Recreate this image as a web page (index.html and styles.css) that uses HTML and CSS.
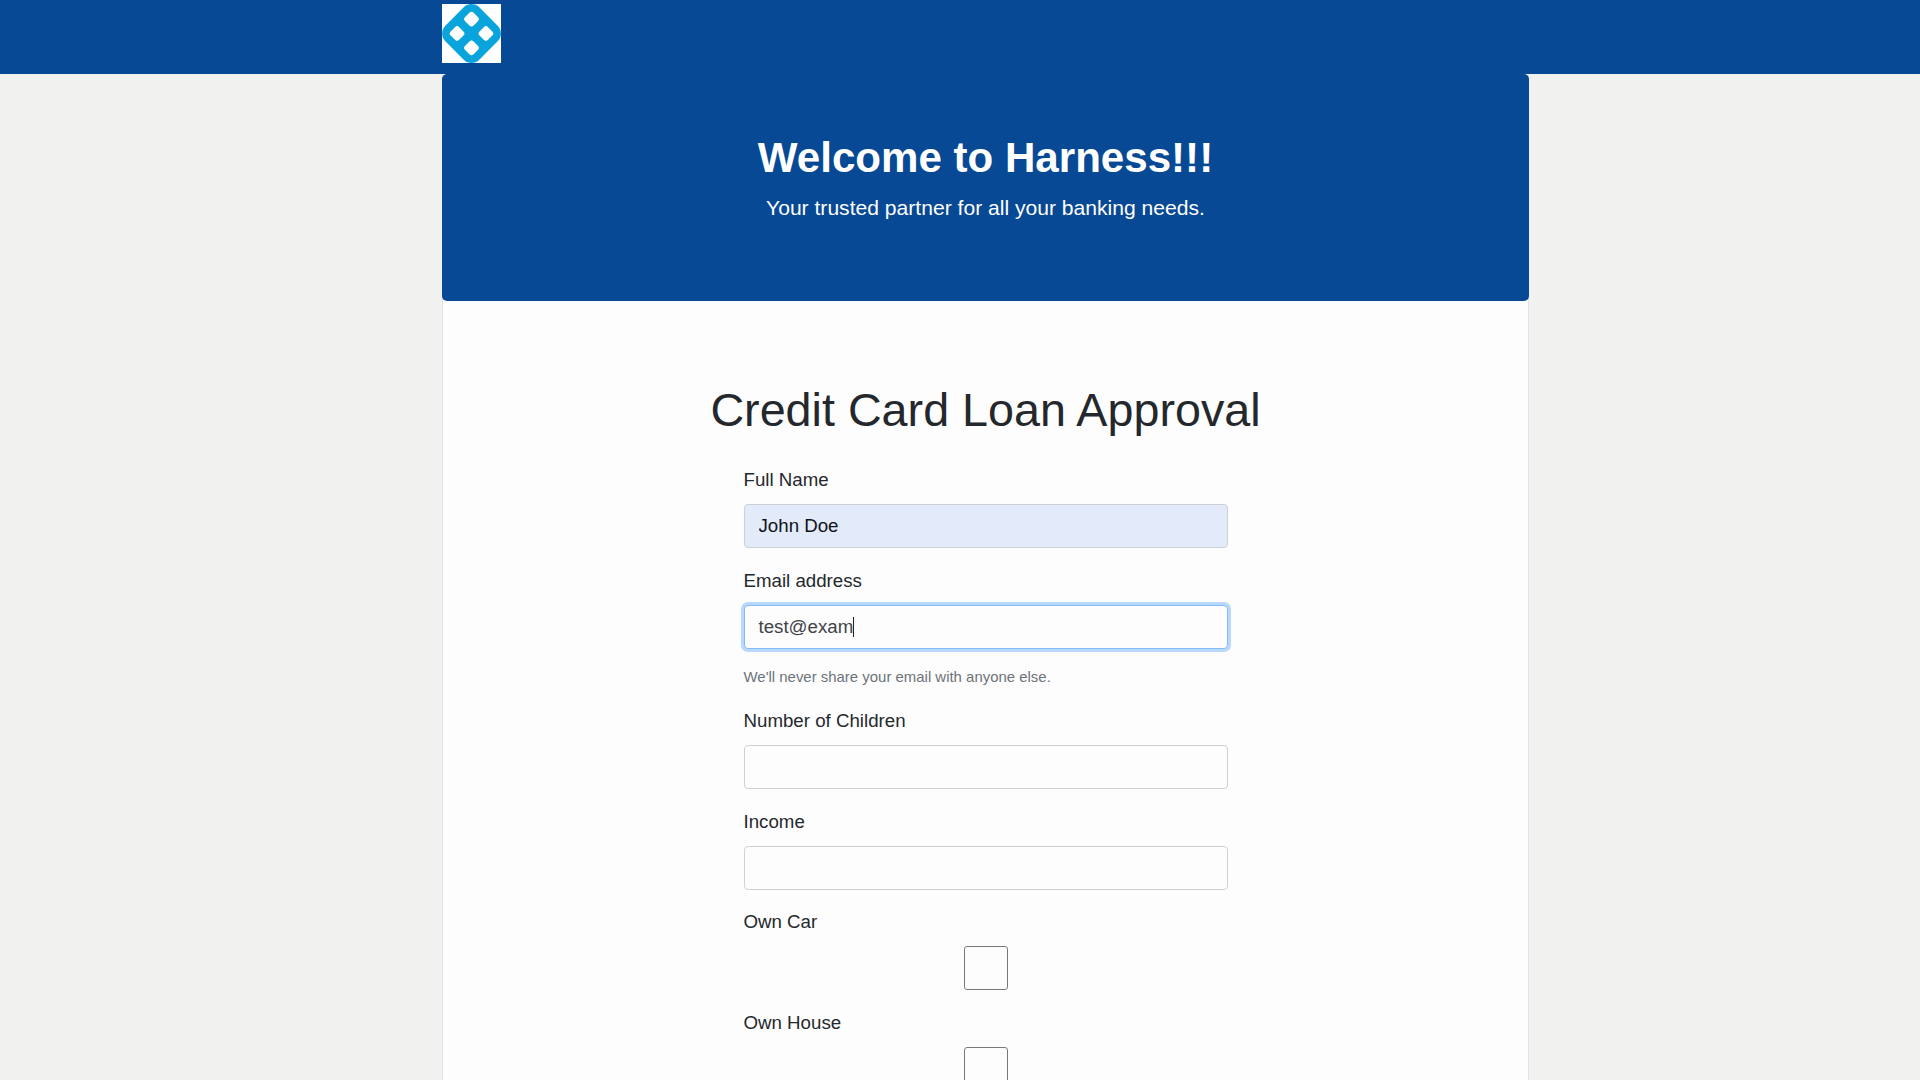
FILE: index.html
```html
<!DOCTYPE html>
<html lang="en">
<head>
<meta charset="utf-8">
<title>Harness Bank</title>
<link rel="stylesheet" href="styles.css">
</head>
<body>
<header class="navbar">
  <div class="container">
    <svg class="logo" viewBox="0 0 59 59" role="img" aria-label="Harness">
      <rect width="59" height="59" fill="#fff"/>
      <rect x="5.5" y="5.5" width="48" height="48" rx="11" fill="#0aa4dc" transform="rotate(45 29.5 29.5)"/>
      <g fill="#fff" transform="rotate(45 29.5 29.5)">
        <rect x="13.3" y="13.3" width="12" height="12" rx="3"/>
        <rect x="33.7" y="13.3" width="12" height="12" rx="3"/>
        <rect x="13.3" y="33.7" width="12" height="12" rx="3"/>
        <rect x="33.7" y="33.7" width="12" height="12" rx="3"/>
      </g>
    </svg>
  </div>
</header>
<main class="container page">
  <section class="hero">
    <h1 class="hero-title">Welcome to Harness!!!</h1>
    <p class="hero-text">Your trusted partner for all your banking needs.</p>
  </section>
  <section class="panel">
    <h2 class="panel-title">Credit Card Loan Approval</h2>
    <form class="form">
      <div class="group">
        <label class="label" for="name">Full Name</label>
        <input class="input filled" id="name" type="text" value="John Doe">
      </div>
      <div class="group">
        <label class="label" for="email">Email address</label>
        <div class="input focused" id="email"><span>test@exam</span><i class="caret"></i></div>
        <small class="hint">We'll never share your email with anyone else.</small>
      </div>
      <div class="group">
        <label class="label" for="children">Number of Children</label>
        <input class="input" id="children" type="text">
      </div>
      <div class="group">
        <label class="label" for="income">Income</label>
        <input class="input" id="income" type="text">
      </div>
      <div class="group">
        <label class="label" for="car">Own Car</label>
        <input class="check" id="car" type="checkbox">
      </div>
      <div class="group">
        <label class="label" for="house">Own House</label>
        <input class="check" id="house" type="checkbox">
      </div>
    </form>
  </section>
</main>
</body>
</html>
```
FILE: styles.css
```css
* { box-sizing: border-box; }
html, body { height: 100%; }
body {
  margin: 0;
  overflow: hidden;
  background: #f1f1f0;
  color: #24282c;
  font: 18.7px/28px "Liberation Sans", Arial, sans-serif;
}
.container { width: 1087px; margin-left: 442px; }
.navbar { height: 74px; padding-top: 4px; background: #074994; }
.logo { display: block; width: 59px; height: 59px; }
.page { height: 1006px; background: #fdfdfd; border: solid #e2e3e5; border-width: 0 1px; }
.hero {
  height: 227px;
  margin: 0 -1px;
  padding-top: 57px;
  border-radius: 5px;
  background: #074994;
  color: #fff;
  text-align: center;
}
.hero-title { margin: 0; font-size: 42.1px; line-height: 54px; font-weight: 700; }
.hero-text { margin: 7px 0 0; font-size: 21.1px; line-height: 32px; }
.panel { padding-top: 81px; }
.panel-title { margin: 0; text-align: center; font-size: 46.7px; line-height: 56px; font-weight: 400; }
.form { width: 484px; margin: 28px auto 0; }
.group { display: flex; flex-direction: column; margin-bottom: 18.5px; }
.label { margin-bottom: 10px; }
.input {
  display: flex;
  align-items: center;
  width: 100%;
  height: 44px;
  padding: 0 14px;
  border: 1px solid #ced0d6;
  border-radius: 4px;
  background: #fdfdfd;
  color: #404448;
  font: inherit;
}
.filled { background: #e3ebfa; color: #101316; }
.focused { border-color: #83bbf5; box-shadow: 0 0 0 3px #b9d8fc; }
.caret { width: 1px; height: 20px; background: #222; }
.hint { margin-top: 16.5px; font-size: 14.95px; line-height: 23.5px; color: #6c747b; }
.check {
  appearance: none;
  align-self: center;
  width: 44px;
  height: 44px;
  margin: 0;
  border: 1px solid #77797d;
  border-radius: 3px;
  background: #fdfdfd;
}
```
